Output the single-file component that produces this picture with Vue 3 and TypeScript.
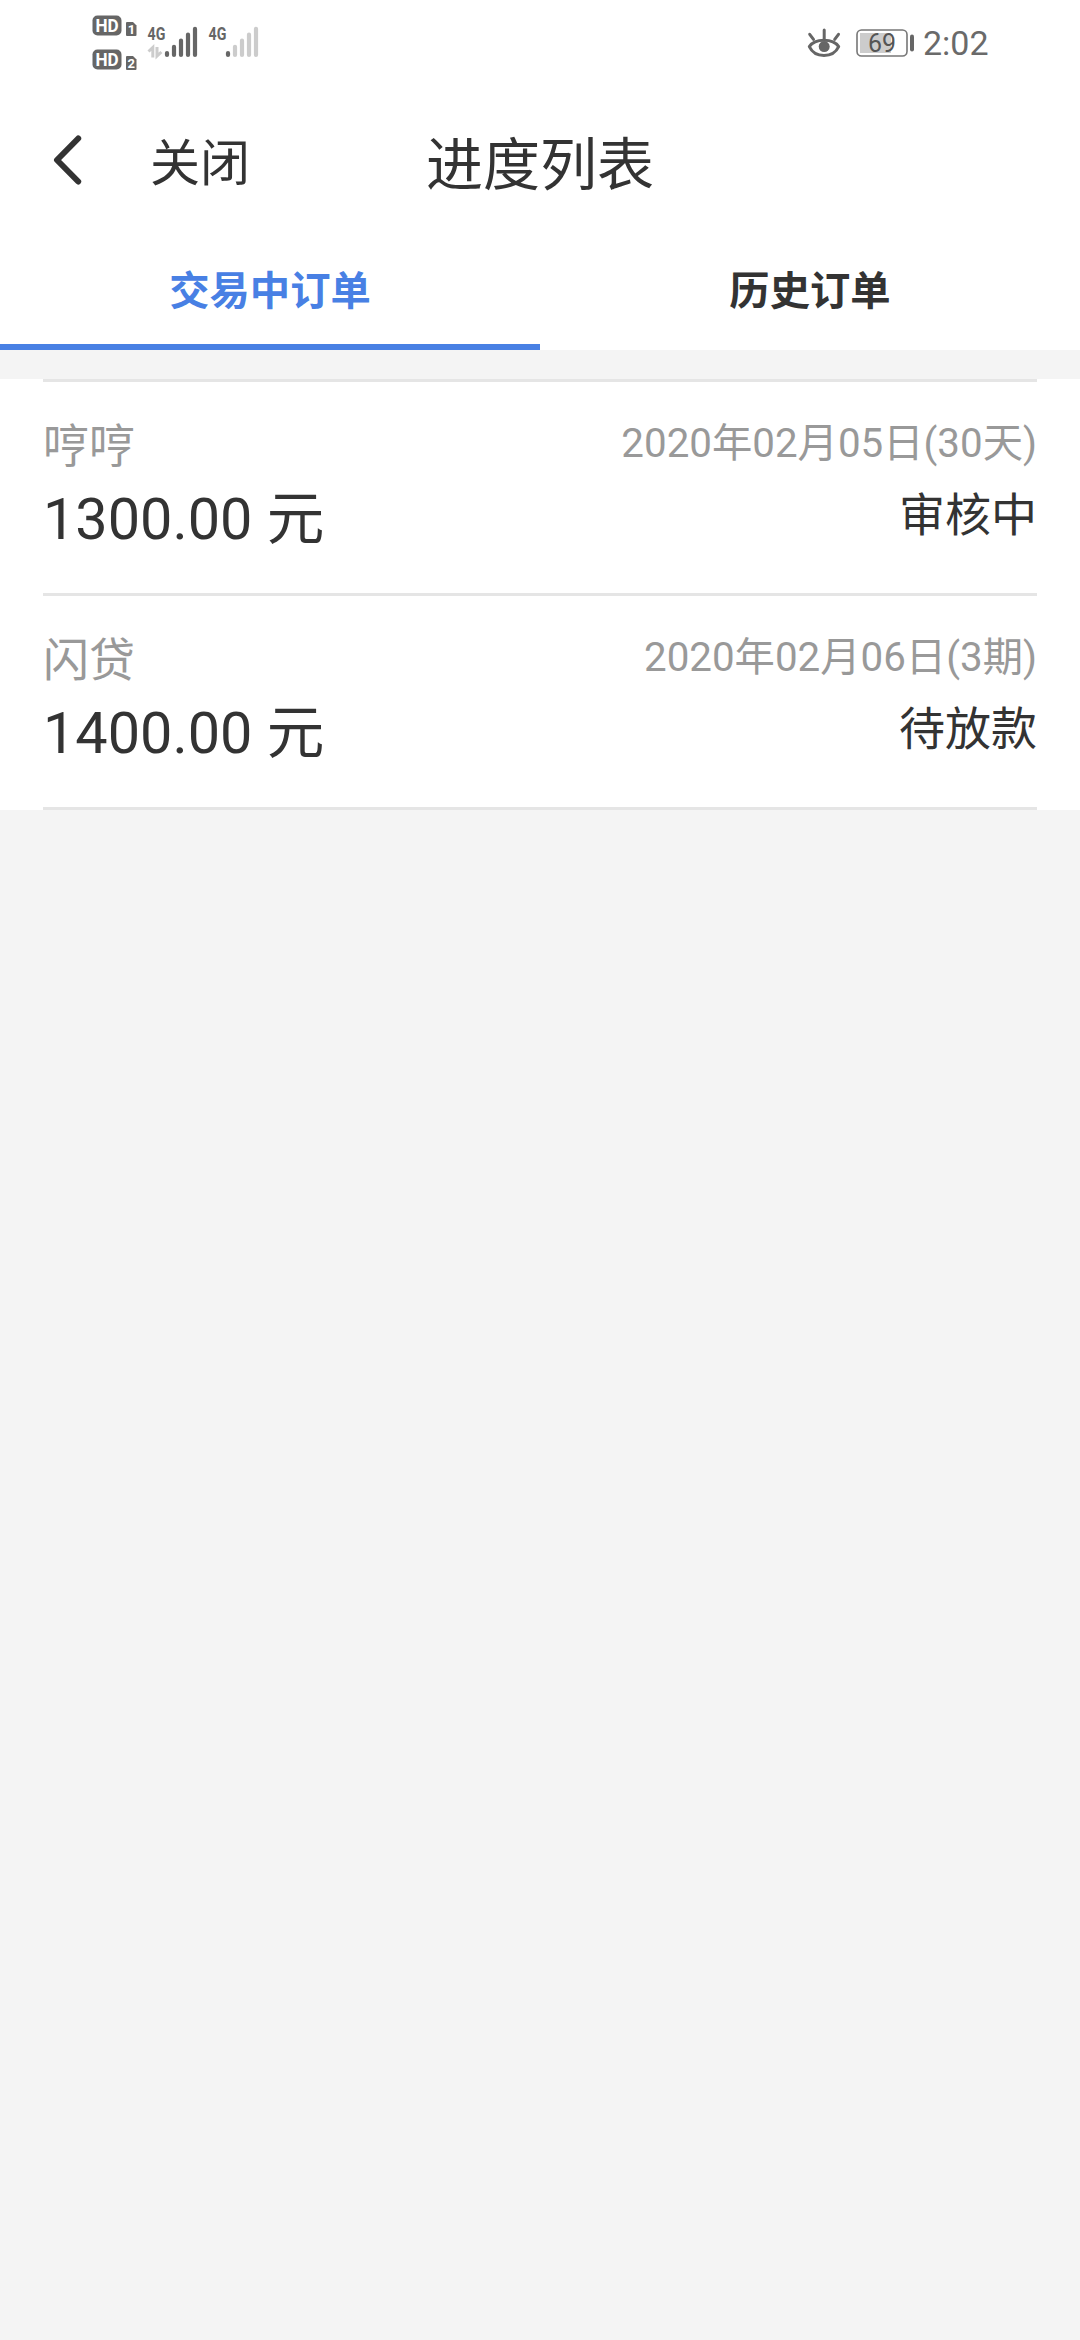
<script setup lang="ts">
import { ref } from 'vue'

interface Order {
  name: string
  amount: string
  date: string
  status: string
}

const tabs: string[] = ['交易中订单', '历史订单']
const activeTab = ref<number>(0)

const orders: Order[] = [
  { name: '哼哼', amount: '1300.00 元', date: '2020年02月05日(30天)', status: '审核中' },
  { name: '闪贷', amount: '1400.00 元', date: '2020年02月06日(3期)', status: '待放款' },
]
</script>

<template>
  <div class="page">
    <div class="status-bar">
      <svg class="signals" width="174" height="62" viewBox="90 10 174 62">
        <g fill="#666">
          <rect x="92.5" y="15.5" width="29" height="20" rx="5" />
          <path d="M127 22h6l3.5 3.5V35q0 1-1 1H127q-1 0-1-1V23q0-1 1-1z" />
          <rect x="92.5" y="49.5" width="29" height="20" rx="5" />
          <path d="M127 56h6l3.5 3.5V69q0 1-1 1H127q-1 0-1-1V57q0-1 1-1z" />
        </g>
        <g fill="#fff" font-weight="700">
          <text x="95.4" y="32" font-size="18" textLength="23.2" lengthAdjust="spacingAndGlyphs">HD</text>
          <text x="127.8" y="34" font-size="13">1</text>
          <text x="95.4" y="66" font-size="18" textLength="23.2" lengthAdjust="spacingAndGlyphs">HD</text>
          <text x="127.6" y="68" font-size="13">2</text>
        </g>
        <g fill="#666" font-weight="700" font-size="18.5">
          <text x="147.5" y="40.3" textLength="17.8" lengthAdjust="spacingAndGlyphs">4G</text>
          <text x="208.5" y="40.3" textLength="17.8" lengthAdjust="spacingAndGlyphs">4G</text>
        </g>
        <path d="M148.5 51.5l4.3-4v10M157 47v9l4.4-4" fill="none" stroke="#ccc" stroke-width="3" />
        <g stroke="#666" stroke-width="4.2" stroke-linecap="round">
          <path d="M167 53v2M174 46.8V55M181 40.6V55M188 34.5V55M195 28.8V55" />
          <path d="M228 53v2" />
          <path d="M235 46.8V55M242 40.6V55M249 34.5V55M256 28.8V55" stroke="#ccc" />
        </g>
      </svg>
      <div class="status-right">
        <svg class="eye" width="34" height="30" viewBox="0 0 34 30">
          <path d="M2.3 18.6C8 10.2 26 10.2 31.7 18.6C26 30.4 8 30.4 2.3 18.6Z" fill="none" stroke="#666" stroke-width="3" stroke-linejoin="round" />
          <circle cx="17.2" cy="18.6" r="5.5" fill="#666" />
          <path d="M17.2 2V11M2.7 6.3l3.8 5M31.5 6.3l-3.8 5" stroke="#666" stroke-width="3" stroke-linecap="round" />
        </svg>
        <svg class="battery" width="59" height="28" viewBox="0 0 59 28">
          <rect x="1" y="1" width="50" height="26" rx="4.5" fill="#fff" stroke="#777" stroke-width="1.6" />
          <rect x="4" y="4" width="31" height="20" fill="#ccc" />
          <rect x="54" y="5.5" width="4" height="17" rx="2" fill="#666" />
          <text x="12" y="22.8" font-size="25.5" fill="#555" textLength="28" lengthAdjust="spacingAndGlyphs">69</text>
        </svg>
        <span class="clock">2:02</span>
      </div>
    </div>

    <header class="nav">
      <div class="nav-left">
        <svg class="back" width="30" height="50" viewBox="0 0 30 50">
          <path d="M25.2 3.5L4 25L25.2 46.5" fill="none" stroke="#333" stroke-width="6" stroke-linecap="round" stroke-linejoin="round" />
        </svg>
        <span class="close">关闭</span>
      </div>
      <h1 class="title">进度列表</h1>
      <div class="nav-right"></div>
    </header>

    <nav class="tabs">
      <div
        v-for="(tab, i) in tabs"
        :key="tab"
        class="tab"
        :class="{ active: i === activeTab }"
        @click="activeTab = i"
      >{{ tab }}</div>
    </nav>

    <main class="list">
      <section v-for="order in orders" :key="order.name" class="order">
        <div class="left">
          <div class="name">{{ order.name }}</div>
          <div class="amount">{{ order.amount }}</div>
        </div>
        <div class="right">
          <div class="date">{{ order.date }}</div>
          <div class="state">{{ order.status }}</div>
        </div>
      </section>
    </main>
  </div>
</template>

<style>
body {
  background: #f4f4f4;
}
</style>

<style scoped>
.page {
  width: 1080px;
  min-height: 2340px;
  background: #f4f4f4;
  color: #333;
  font-family: Roboto, 'Noto Sans CJK SC', sans-serif;
}
.status-bar {
  display: flex;
  justify-content: space-between;
  align-items: flex-start;
  box-sizing: border-box;
  height: 88px;
  padding: 10px 0 0 90px;
  background: #fff;
}
.signals,
.eye,
.battery {
  display: block;
}
.status-right {
  display: flex;
  align-items: center;
  width: 273px;
  height: 65px;
}
.battery {
  margin: 0 8px 0 15px;
}
.clock {
  font-size: 34px;
  line-height: 40px;
  color: #6a6a6a;
}
.nav {
  display: flex;
  align-items: flex-start;
  height: 150px;
  background: #fff;
}
.nav-left,
.nav-right {
  flex: 1;
}
.nav-left {
  display: flex;
  align-items: flex-start;
  padding-left: 53px;
}
.nav-right {
  padding-left: 53px;
}
.back {
  margin-top: 47px;
}
.close {
  margin-top: 46px;
  margin-left: 67px;
  font-size: 50px;
  line-height: 60px;
}
.title {
  margin: 45px 0 0;
  font-size: 57px;
  font-weight: 400;
  line-height: 66px;
}
.tabs {
  display: flex;
  height: 112px;
  background: #fff;
}
.tab {
  flex: 1;
  box-sizing: border-box;
  padding-top: 24px;
  border-bottom: 6px solid transparent;
  font-size: 40.32px;
  font-weight: 700;
  line-height: 60px;
  text-align: center;
}
.tab.active {
  color: #4880e4;
  border-bottom-color: #4880e4;
}
.list {
  margin-top: 29px;
  padding: 0 43px;
  background: #fff;
}
.order {
  display: flex;
  justify-content: space-between;
  box-sizing: border-box;
  height: 214px;
  padding-top: 38px;
  border-top: 3px solid #e5e5e5;
}
.order:last-child {
  height: 217px;
  border-bottom: 3px solid #e5e5e5;
}
.name {
  font-size: 46px;
  line-height: 52px;
  color: #999;
}
.amount {
  margin-top: 18px;
  font-size: 57.6px;
  line-height: 60px;
}
.right {
  text-align: right;
}
.date {
  font-size: 40.32px;
  line-height: 47px;
  color: #999;
}
.state {
  margin-top: 22px;
  font-size: 46px;
  line-height: 52px;
}
</style>
